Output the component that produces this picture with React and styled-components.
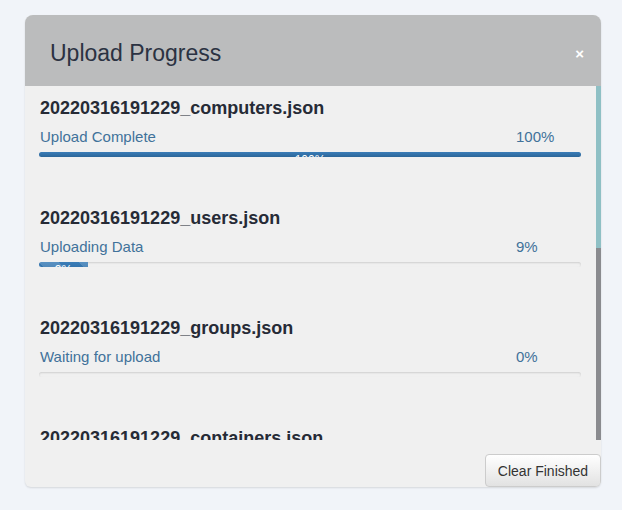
import React from "react";
import styled, { createGlobalStyle, css } from "styled-components";

const Global = createGlobalStyle`
  html, body { margin: 0; padding: 0; background: #f1f4f9; }
  body { font-family: "Liberation Sans", Arial, Helvetica, sans-serif; }
  * { box-sizing: border-box; }
`;

const Page = styled.div`
  width: 622px;
  height: 510px;
  padding: 15px 21px 23px 25px;
`;

const Modal = styled.div`
  width: 576px;
  height: 472px;
  display: flex;
  flex-direction: column;
  background: #f0f0f0;
  border-radius: 8px 8px 6px 6px;
  overflow: hidden;
  box-shadow: 0 1px 2px rgba(0, 0, 0, 0.12);
`;

const Header = styled.div`
  height: 71px;
  flex: none;
  display: flex;
  align-items: center;
  justify-content: space-between;
  padding: 4px 17px 0 25px;
  background: #bbbcbd;
`;

const Title = styled.h4`
  margin: 0;
  font-size: 23px;
  font-weight: 400;
  line-height: 26px;
  color: #2b3242;
`;

const Close = styled.button`
  border: 0;
  background: none;
  padding: 0;
  margin-top: 2px;
  color: #ffffff;
  font-family: inherit;
  font-size: 15px;
  font-weight: 700;
  line-height: 1;
  cursor: pointer;
`;

const Body = styled.div`
  height: 354px;
  flex: none;
  display: flex;
`;

const Scroller = styled.div`
  flex: 1;
  overflow: hidden;
  padding: 0 15px;
`;

const ScrollTrack = styled.div`
  width: 5px;
  flex: none;
  background: #8a8b8f;
`;

const ScrollThumb = styled.div`
  height: 162px;
  background: #8fc0c5;
`;

const Item = styled.div`
  padding-top: 12px;
  padding-bottom: 39px;
`;

const FileName = styled.div`
  font-size: 18px;
  font-weight: 700;
  line-height: 20px;
  color: #262b36;
  margin-bottom: 8px;
`;

const StatusRow = styled.div`
  display: grid;
  grid-template-columns: 476px 1fr;
  font-size: 15px;
  line-height: 21px;
  color: #41729a;
`;

const Track = styled.div`
  margin: 5px 0 0 -1px;
  height: 5px;
  border-radius: 3px;
  overflow: hidden;
  background: #f0f0f0;
  box-shadow: inset 0 1px 2px rgba(0, 0, 0, 0.14);
`;

const Fill = styled.div`
  height: 100%;
  font-size: 12px;
  line-height: 16px;
  color: #fff;
  text-align: center;
  white-space: nowrap;
  background-image: linear-gradient(to bottom, #3a7db8 0%, #2c6699 100%);
  ${(p) =>
    p.$striped &&
    css`
      background-image: linear-gradient(
          45deg,
          rgba(255, 255, 255, 0.15) 25%,
          transparent 25%,
          transparent 50%,
          rgba(255, 255, 255, 0.15) 50%,
          rgba(255, 255, 255, 0.15) 75%,
          transparent 75%,
          transparent
        ),
        linear-gradient(to bottom, #3a7db8 0%, #3474ad 100%);
      background-size: 40px 40px, 100% 100%;
    `}
`;

const Footer = styled.div`
  flex: 1;
  display: flex;
  justify-content: flex-end;
  align-items: flex-end;
`;

const Button = styled.button`
  width: 116px;
  height: 33px;
  border: 1px solid #cccccc;
  border-radius: 4px;
  background-image: linear-gradient(to bottom, #ffffff 0%, #e2e2e2 100%);
  color: #333;
  font-family: inherit;
  font-size: 14px;
  line-height: 20px;
  padding: 0;
  box-shadow: inset 0 1px 0 rgba(255, 255, 255, 0.15);
`;

const files = [
  { name: "20220316191229_computers.json", status: "Upload Complete", pct: 100 },
  { name: "20220316191229_users.json", status: "Uploading Data", pct: 9, striped: true },
  { name: "20220316191229_groups.json", status: "Waiting for upload", pct: 0 },
  { name: "20220316191229_containers.json", status: "Waiting for upload", pct: 0 },
];

export default function App() {
  return (
    <Page>
      <Global />
      <Modal>
        <Header>
          <Title>Upload Progress</Title>
          <Close aria-label="Close">×</Close>
        </Header>
        <Body>
          <Scroller>
            {files.map((f) => (
              <Item key={f.name}>
                <FileName>{f.name}</FileName>
                <StatusRow>
                  <span>{f.status}</span>
                  <span>{f.pct}%</span>
                </StatusRow>
                <Track>
                  <Fill $striped={f.striped} style={{ width: `${f.pct}%` }}>
                    {f.pct > 0 ? `${f.pct}%` : ""}
                  </Fill>
                </Track>
              </Item>
            ))}
          </Scroller>
          <ScrollTrack>
            <ScrollThumb />
          </ScrollTrack>
        </Body>
        <Footer>
          <Button>Clear Finished</Button>
        </Footer>
      </Modal>
    </Page>
  );
}
